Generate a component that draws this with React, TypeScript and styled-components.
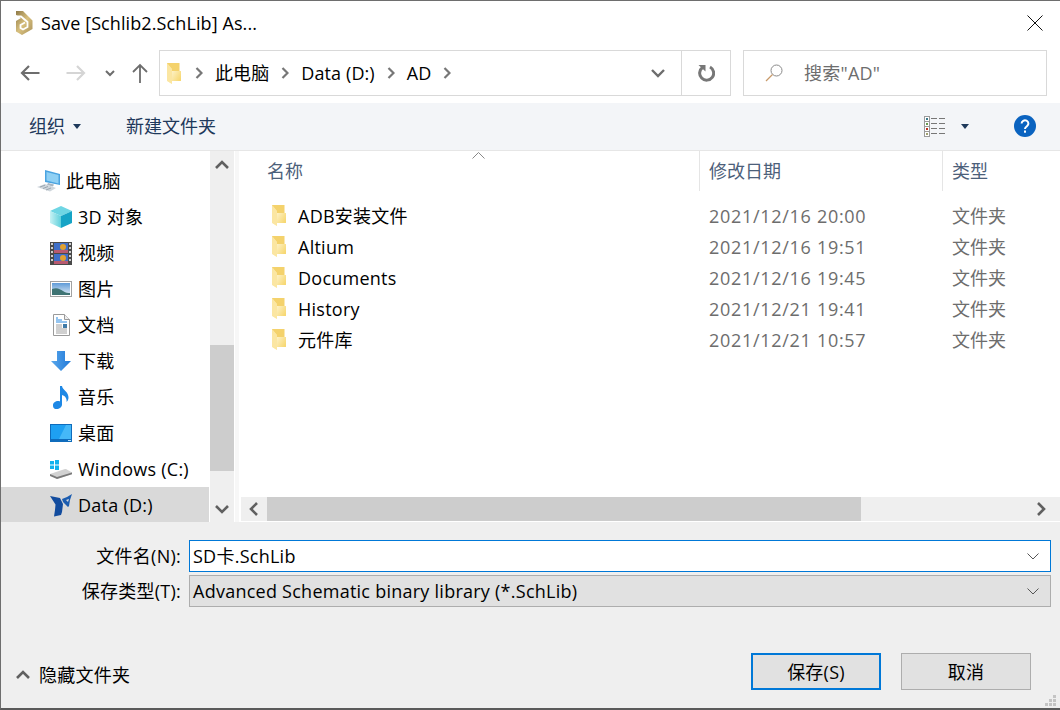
import styled, { createGlobalStyle } from "styled-components";

const GlobalStyle = createGlobalStyle`
  html, body {
    margin: 0;
    padding: 0;
    background: #fff;
  }
  * {
    box-sizing: border-box;
  }
`;

const uiFont = `"Open Sans", "Noto Sans CJK SC", sans-serif`;

const Frame = styled.div`
  width: 1060px;
  height: 710px;
  display: flex;
  flex-direction: column;
  position: relative;
  overflow: hidden;
  border-top: 1px solid #6e6e6e;
  border-left: 1px solid #6e6e6e;
  border-bottom: 2px solid #5a5a5a;
  background: #fff;
  font-family: ${uiFont};
  font-size: 18px;
  line-height: 24px;
  letter-spacing: 0.25px;
  color: #000;
`;

const TitleBar = styled.div`
  height: 49px;
  flex: none;
  display: flex;
  align-items: center;
  padding: 0 17px 5px 15px;
`;

const TitleText = styled.span`
  margin-left: 8px;
  letter-spacing: 0.1px;
  flex: 1;
`;

const NavRow = styled.div`
  height: 53px;
  flex: none;
  display: flex;
  padding: 0 0 7px 9px;
`;

const NavButton = styled.div<{ $w: number }>`
  width: ${(p) => p.$w}px;
  margin-right: 6px;
  flex: none;
  display: flex;
  align-items: center;
  justify-content: center;
`;

const AddressBar = styled.div`
  width: 572px;
  margin-left: -3px;
  flex: none;
  display: flex;
  align-items: center;
  border: 1px solid #d9d9d9;
`;

const Crumbs = styled.div`
  flex: 1;
  display: flex;
  align-items: center;
  gap: 12px;
  padding-left: 7px;
  letter-spacing: 0.1px;
`;

const CrumbFolder = styled.div`
  margin-right: 2px;
  display: flex;
`;

const AddressAction = styled.div<{ $w: number; $divided?: boolean }>`
  width: ${(p) => p.$w}px;
  height: 100%;
  flex: none;
  display: flex;
  align-items: center;
  justify-content: center;
  border-left: ${(p) => (p.$divided ? "1px solid #d9d9d9" : "none")};
`;

const SearchBox = styled.div`
  width: 304px;
  margin-left: 12px;
  flex: none;
  display: flex;
  align-items: center;
  gap: 21px;
  padding-left: 21px;
  border: 1px solid #d9d9d9;
  color: #6d6d6d;
`;

const Toolbar = styled.div`
  height: 48px;
  flex: none;
  display: flex;
  align-items: center;
  padding: 0 24px 1px 28px;
  background: #f3f5f8;
  border-bottom: 1px solid #e6e6e6;
  color: #1e395b;
  letter-spacing: 0;
`;

const ToolItem = styled.div<{ $gap?: number }>`
  display: flex;
  align-items: center;
  gap: ${(p) => p.$gap ?? 8}px;
  margin-right: 45px;
`;

const ToolSpacer = styled.div`
  flex: 1;
`;

const HelpSlot = styled.div`
  display: flex;
`;

const Main = styled.div`
  height: 371px;
  flex: none;
  display: flex;
`;

const Sidebar = styled.div`
  width: 209px;
  flex: none;
  padding: 12px 1px 0 0;
  display: flex;
  flex-direction: column;
`;

const NavTreeRow = styled.div<{ $indent: number; $selected?: boolean }>`
  height: 36px;
  flex: none;
  display: flex;
  align-items: center;
  gap: 5px;
  padding-left: ${(p) => p.$indent}px;
  background: ${(p) => (p.$selected ? "#d9d9d9" : "transparent")};
`;

const TreeIcon = styled.div`
  width: 24px;
  height: 24px;
  flex: none;
  display: flex;
  align-items: center;
  justify-content: center;
`;

const VScroll = styled.div`
  width: 24px;
  flex: none;
  display: flex;
  flex-direction: column;
  background: #efefef;
`;

const ScrollArrow = styled.div<{ $w?: number }>`
  flex: none;
  width: ${(p) => (p.$w ? `${p.$w}px` : "100%")};
  height: ${(p) => (p.$w ? "100%" : "27px")};
  display: flex;
  align-items: center;
  justify-content: center;
`;

const VTrack = styled.div`
  flex: 1;
  padding: 167px 0 24px;
  display: flex;
`;

const Thumb = styled.div`
  flex: 1;
  background: #cdcdcd;
`;

const PaneGap = styled.div`
  width: 7px;
  flex: none;
  background: linear-gradient(90deg, #fff 0, #fff 1px, #f7f7f7 1px, #f7f7f7 5px, #fff 5px);
`;

const ContentPane = styled.div`
  flex: 1;
  min-width: 0;
  position: relative;
  display: flex;
  flex-direction: column;
`;

const FileList = styled.div`
  flex: 1;
`;

const columns = "458px 243px 1fr";

const HeaderRow = styled.div`
  height: 40px;
  display: grid;
  grid-template-columns: ${columns};
  color: #4c607a;
  letter-spacing: 0;
`;

const HeaderCell = styled.div<{ $pad: number; $divided?: boolean }>`
  display: flex;
  align-items: center;
  padding-left: ${(p) => p.$pad}px;
  border-left: ${(p) => (p.$divided ? "1px solid #e5e5e5" : "none")};
`;

const SortArrow = styled.svg`
  position: absolute;
  left: 231px;
  top: 1px;
  width: 13px;
  height: 7px;
`;

const FileRows = styled.div`
  padding-top: 9px;
`;

const FileRow = styled.div`
  height: 31px;
  display: grid;
  grid-template-columns: ${columns};
  align-items: center;
`;

const NameCell = styled.div`
  display: flex;
  align-items: center;
  gap: 12px;
  padding-left: 31px;
`;

const MetaCell = styled.div<{ $spread?: boolean }>`
  padding-left: 10px;
  color: #6d6d6d;
  letter-spacing: ${(p) => (p.$spread ? "0.7px" : "0")};
`;

const HScroll = styled.div`
  height: 24px;
  flex: none;
  margin-bottom: 1px;
  display: flex;
  background: #efefef;
`;

const HTrack = styled.div`
  width: 594px;
  background: #cdcdcd;
`;

const HSpacer = styled.div`
  flex: 1;
`;

const Footer = styled.div`
  flex: 1;
  display: flex;
  flex-direction: column;
  padding-top: 18px;
  background: #efefef;
`;

const FieldRow = styled.div`
  height: 32px;
  margin-bottom: 3px;
  display: flex;
  align-items: center;
  padding-right: 9px;
`;

const FieldLabel = styled.div`
  width: 180px;
  flex: none;
  margin-right: 8px;
  text-align: right;
`;

const Field = styled.div<{ $focused?: boolean }>`
  flex: 1;
  height: 100%;
  display: flex;
  align-items: center;
  justify-content: space-between;
  padding: 0 11px 0 3px;
  border: 1px solid ${(p) => (p.$focused ? "#0078d7" : "#adadad")};
  background: ${(p) => (p.$focused ? "#fff" : "#e1e1e1")};
`;

const ActionRow = styled.div`
  margin-top: 43px;
  height: 37px;
  display: flex;
  padding: 0 29px 0 15px;
`;

const ToggleFolders = styled.div`
  align-self: flex-end;
  height: 30px;
  flex: 1;
  display: flex;
  align-items: center;
  gap: 9px;
`;

const DialogButton = styled.div<{ $primary?: boolean }>`
  width: 130px;
  height: 37px;
  margin-left: 20px;
  display: flex;
  align-items: center;
  justify-content: center;
  background: #e1e1e1;
  border: ${(p) => (p.$primary ? "2px solid #0078d7" : "1px solid #adadad")};
`;

const Grip = styled.svg`
  position: absolute;
  right: 3px;
  bottom: 1px;
  width: 12px;
  height: 12px;
`;

const CloseIcon = () => (
  <svg width="16" height="16" viewBox="0 0 16 16">
    <path d="M.5.5l15 15M15.5.5l-15 15" stroke="#111" strokeWidth="1" fill="none" />
  </svg>
);

const AppLogo = () => (
  <svg width="17" height="24" viewBox="0 0 17 24">
    <defs>
      <linearGradient id="logoGold" x1="0" y1="0" x2="1" y2="1">
        <stop offset="0" stopColor="#8f7a48" />
        <stop offset="0.5" stopColor="#d8c07e" />
        <stop offset="1" stopColor="#a8905a" />
      </linearGradient>
    </defs>
    <path d="M0 0h7l9.500 9.500V18L6 24l-6-3.500V10l5-3L0 4z" fill="url(#logoGold)" />
    <path d="M0 5.500h5l6.500 5.500v5L7 18.500l-2.500-1.500v-3L9 11.500" stroke="#fff" strokeWidth="1.800" fill="none" />
  </svg>
);

const BackArrow = ({ color }: { color: string }) => (
  <svg width="20" height="16" viewBox="0 0 20 16">
    <path d="M19.500 8H2M9 1L2 8l7 7" stroke={color} strokeWidth="2.200" fill="none" />
  </svg>
);

const ForwardArrow = ({ color }: { color: string }) => (
  <svg width="20" height="16" viewBox="0 0 20 16">
    <path d="M.5 8H18M11 1l7 7-7 7" stroke={color} strokeWidth="2.200" fill="none" />
  </svg>
);

const UpArrow = () => (
  <svg width="16" height="20" viewBox="0 0 16 20">
    <path d="M8 20V2M1 9l7-7 7 7" stroke="#6d6d6d" strokeWidth="1.800" fill="none" />
  </svg>
);

const SmallDown = ({ color = "#6d6d6d" }: { color?: string }) => (
  <svg width="10" height="7" viewBox="0 0 10 7">
    <path d="M1 1l4 4 4-4" stroke={color} strokeWidth="2" fill="none" />
  </svg>
);

const CrumbChevron = () => (
  <svg width="8" height="12" viewBox="0 0 8 12">
    <path d="M1.500 1l5 5-5 5" stroke="#777" strokeWidth="2.200" fill="none" />
  </svg>
);

const WideDown = () => (
  <svg width="14" height="9" viewBox="0 0 14 9">
    <path d="M1 1l6 6 6-6" stroke="#6d6d6d" strokeWidth="2.400" fill="none" />
  </svg>
);

const Refresh = () => (
  <svg width="18" height="18" viewBox="0 0 18 18">
    <path d="M5.500 3.500A7 7 0 1 0 13 3" stroke="#777" strokeWidth="3" fill="none" />
    <path d="M1.500 1L8.500 1v6.500z" fill="#777" />
  </svg>
);

const SearchGlyph = () => (
  <svg width="18" height="18" viewBox="0 0 18 18">
    <circle cx="11.500" cy="6.500" r="5.500" stroke="#8a8a8a" strokeWidth="1" fill="none" />
    <path d="M7.500 10.500L1 17" stroke="#c89a6a" strokeWidth="1.200" fill="none" />
  </svg>
);

const Caret = () => (
  <svg width="8" height="5" viewBox="0 0 8 5">
    <path d="M0 0h8L4 5z" fill="#1e395b" />
  </svg>
);

const ViewList = () => (
  <svg width="21" height="21" viewBox="0 0 21 21">
    <rect x=".5" y=".5" width="5" height="20" fill="#fff" stroke="#9a9a9a" />
    <path d="M1 5.500h4M1 10.500h4M1 15.500h4" stroke="#9a9a9a" />
    <rect x="2" y="2" width="2" height="2" fill="#3a7a8a" />
    <rect x="2" y="7" width="2" height="2" fill="#6a9a50" />
    <rect x="2" y="12" width="2" height="2" fill="#c03020" />
    <rect x="2" y="17" width="2" height="2" fill="#a0a070" />
    <path d="M7 2.500h6M15 2.500h6M7 7.500h6M15 7.500h6M7 12.500h6M15 12.500h6M7 17.500h6M15 17.500h6" stroke="#777" />
  </svg>
);

const HelpIcon = () => (
  <svg width="22" height="22" viewBox="0 0 22 22">
    <circle cx="11" cy="11" r="11" fill="#0a63c0" />
    <path
      d="M7.600 8.500a3.400 3.200 0 1 1 5.400 2.600c-1.300 1-2 1.500-2 3"
      stroke="#fff"
      strokeWidth="2"
      fill="none"
    />
    <rect x="10" y="15.500" width="2" height="2.200" fill="#fff" />
  </svg>
);

const FolderIcon = ({ id }: { id: string }) => (
  <svg width="14" height="21" viewBox="0 0 14 21">
    <defs>
      <linearGradient id={id} x1="0" y1="0" x2="1" y2="0.7">
        <stop offset="0" stopColor="#fdf1c6" />
        <stop offset="1" stopColor="#f7d873" />
      </linearGradient>
    </defs>
    <path d="M0 0h12.500v9H14v9H0z" fill="#f4d26c" />
    <path d="M1 1.500l4 5V21l-4-2.500z" fill="#fdf3cf" />
    <path d="M5 8h9v10H5z" fill={`url(#${id})`} />
    <path d="M0 0l5 6v15l-5-3z" fill="#fbe6a2" />
  </svg>
);

const PcIcon = () => (
  <svg width="24" height="22" viewBox="0 0 24 22">
    <path d="M8 0l15 4v11L8 12z" fill="#4aa3e0" />
    <path d="M9.500 2l12 3v8.500l-12-3z" fill="#8fd0f4" />
    <path d="M11 13l6 1.500-1 2-6-1.500z" fill="#a8b6c2" />
    <path d="M0 17l8-3 11 4-6 3.500z" fill="#cfd6dc" />
    <path d="M3 17l5-1.800M6 18.500l5-2M9 20l5-2" stroke="#9aa6b0" fill="none" />
  </svg>
);

const CubeIcon = () => (
  <svg width="22" height="22" viewBox="0 0 22 22">
    <defs>
      <linearGradient id="cubeLeft" x1="0" y1="0" x2="1" y2="0">
        <stop offset="0" stopColor="#c8f2f4" />
        <stop offset="1" stopColor="#5fd0dc" />
      </linearGradient>
    </defs>
    <path d="M11 0l11 5-11 5L0 5z" fill="#6fd6e4" />
    <path d="M0 5l11 5v12L0 17z" fill="url(#cubeLeft)" />
    <path d="M22 5L11 10v12l11-5z" fill="#16a4c6" />
  </svg>
);

const FilmIcon = () => (
  <svg width="22" height="23" viewBox="0 0 22 23">
    <rect width="22" height="23" fill="#4a4a4a" />
    <path d="M1 1h2v2H1zM1 5h2v2H1zM1 9h2v2H1zM1 13h2v2H1zM1 17h2v2H1zM19 1h2v2h-2zM19 5h2v2h-2zM19 9h2v2h-2zM19 13h2v2h-2zM19 17h2v2h-2z" fill="#cfcfcf" />
    <rect x="4" y="1" width="14" height="10" fill="#3f6fc8" />
    <rect x="4" y="12" width="14" height="10" fill="#3f6fc8" />
    <path d="M4 8h14v3H4zM4 19h14v3H4z" fill="#b85a70" />
    <circle cx="13" cy="5" r="3" fill="#e0a030" />
    <circle cx="13" cy="16" r="3" fill="#e0a030" />
  </svg>
);

const PictureIcon = () => (
  <svg width="22" height="16" viewBox="0 0 22 16">
    <defs>
      <linearGradient id="picSky" x1="0" y1="0" x2="0" y2="1">
        <stop offset="0" stopColor="#5f9bd8" />
        <stop offset="1" stopColor="#e4eef6" />
      </linearGradient>
    </defs>
    <rect x=".5" y=".5" width="21" height="15" fill="#fff" stroke="#a3a3a3" />
    <rect x="2" y="2" width="18" height="12" fill="url(#picSky)" />
    <path d="M2 8c5-2 8 0 11 2s5 2 7 2v2H2z" fill="#3f7474" />
  </svg>
);

const DocIcon = () => (
  <svg width="17" height="22" viewBox="0 0 17 22">
    <path d="M.5.5h11l5 5v16H.5z" fill="#fff" stroke="#9a9a9a" />
    <path d="M11.500.5v5h5" fill="#eee" stroke="#9a9a9a" />
    <path d="M3 4h2M3 6h6M3 8h11" stroke="#2a8ae0" />
    <path d="M3 11h6M3 13h6M3 15h11M3 17h11M3 19h11" stroke="#a0a0a0" />
    <rect x="10" y="10" width="4" height="4" fill="#3f7aa8" />
  </svg>
);

const DownloadIcon = () => (
  <svg width="20" height="20" viewBox="0 0 20 20">
    <defs>
      <linearGradient id="dlBlue" x1="0" y1="0" x2="1" y2="0">
        <stop offset="0" stopColor="#5aa8ec" />
        <stop offset="1" stopColor="#1f78d8" />
      </linearGradient>
    </defs>
    <path d="M6 0h8v10h6l-10 10L0 10h6z" fill="url(#dlBlue)" />
  </svg>
);

const MusicIcon = () => (
  <svg width="18" height="23" viewBox="0 0 18 23">
    <path
      d="M8 0h2c.5 4 7 6 6.500 12-.2 2-1 3-2 4 .5-3-1-6-4.500-7v9.500c0 2.500-2.500 4.500-5.500 4.500S1 21 1 19s2.500-4 5-4c.7 0 1.500.1 2 .4z"
      fill="#1e88e5"
    />
  </svg>
);

const DesktopIcon = () => (
  <svg width="22" height="18" viewBox="0 0 22 18">
    <rect width="22" height="18" fill="#0f6cbc" />
    <rect x="1" y="1" width="20" height="14" fill="#1ea0f2" />
    <path d="M9 15L16 1h5v14z" fill="#45b8f8" />
    <path d="M18 16.500h3" stroke="#bfe4fa" />
  </svg>
);

const DriveIcon = () => (
  <svg width="23" height="19" viewBox="0 0 23 19">
    <path d="M0 1h4v3.500H0zM5 0h4v4.500H5zM0 5.500h4V9H0zM5 5.500h4V10H5z" fill="#12b2ee" />
    <path d="M0 14l15-5h1l6 3.500v1.500L7 19z" fill="#d2d2d2" />
    <path d="M0 14l7 3 15-4.500v1.800L7 19l-7-3z" fill="#7a7a7a" />
  </svg>
);

const NiLogo = () => (
  <svg width="23" height="23" viewBox="0 0 23 23">
    <path d="M0 2l10 2 3 6-1 8-1 3-7 1.500 1-6.500.5-5.500z" fill="#124c9e" />
    <path d="M22 0l-2 6-1 6-1 1-5-5-1-3 5-2z" fill="#1c5db0" />
    <path d="M16 6l3-1-1 3z" fill="#d9d9d9" />
  </svg>
);

const ScrollChevron = ({ dir }: { dir: "up" | "down" | "left" | "right" }) => {
  const paths = {
    up: "M1 8l6-6 6 6",
    down: "M1 2l6 6 6-6",
    left: "M8 1L2 7l6 6",
    right: "M2 1l6 6-6 6",
  };
  const flat = dir === "up" || dir === "down";
  return (
    <svg width={flat ? 14 : 10} height={flat ? 10 : 14} viewBox={flat ? "0 0 14 10" : "0 0 10 14"}>
      <path d={paths[dir]} stroke="#606060" strokeWidth="2.600" fill="none" />
    </svg>
  );
};

const ThinDown = () => (
  <svg width="12" height="7" viewBox="0 0 12 7">
    <path d="M.5.5L6 6 11.500.5" stroke="#555" strokeWidth="1" fill="none" />
  </svg>
);

const treeItems = [
  { label: "此电脑", icon: <PcIcon />, indent: 36 },
  { label: "3D 对象", icon: <CubeIcon />, indent: 48 },
  { label: "视频", icon: <FilmIcon />, indent: 48 },
  { label: "图片", icon: <PictureIcon />, indent: 48 },
  { label: "文档", icon: <DocIcon />, indent: 48 },
  { label: "下载", icon: <DownloadIcon />, indent: 48 },
  { label: "音乐", icon: <MusicIcon />, indent: 48 },
  { label: "桌面", icon: <DesktopIcon />, indent: 48 },
  { label: "Windows (C:)", icon: <DriveIcon />, indent: 48 },
  { label: "Data (D:)", icon: <NiLogo />, indent: 48, selected: true },
];

const files = [
  { name: "ADB安装文件", date: "2021/12/16 20:00" },
  { name: "Altium", date: "2021/12/16 19:51" },
  { name: "Documents", date: "2021/12/16 19:45" },
  { name: "History", date: "2021/12/21 19:41" },
  { name: "元件库", date: "2021/12/21 10:57" },
];

const App = () => {
  return (
    <Frame>
      <GlobalStyle />
      <TitleBar>
        <AppLogo />
        <TitleText>Save [Schlib2.SchLib] As...</TitleText>
        <CloseIcon />
      </TitleBar>

      <NavRow>
        <NavButton $w={40}>
          <BackArrow color="#6d6d6d" />
        </NavButton>
        <NavButton $w={40}>
          <ForwardArrow color="#d5d5d5" />
        </NavButton>
        <NavButton $w={16}>
          <SmallDown />
        </NavButton>
        <NavButton $w={32}>
          <UpArrow />
        </NavButton>
        <AddressBar>
          <Crumbs>
            <CrumbFolder>
              <FolderIcon id="crumbFolder" />
            </CrumbFolder>
            <CrumbChevron />
            <span>此电脑</span>
            <CrumbChevron />
            <span>Data (D:)</span>
            <CrumbChevron />
            <span>AD</span>
            <CrumbChevron />
          </Crumbs>
          <AddressAction $w={46}>
            <WideDown />
          </AddressAction>
          <AddressAction $w={49} $divided>
            <Refresh />
          </AddressAction>
        </AddressBar>
        <SearchBox>
          <SearchGlyph />
          <span>搜索"AD"</span>
        </SearchBox>
      </NavRow>

      <Toolbar>
        <ToolItem>
          <span>组织</span>
          <Caret />
        </ToolItem>
        <ToolItem>新建文件夹</ToolItem>
        <ToolSpacer />
        <ToolItem $gap={16}>
          <ViewList />
          <Caret />
        </ToolItem>
        <HelpSlot>
          <HelpIcon />
        </HelpSlot>
      </Toolbar>

      <Main>
        <Sidebar>
          {treeItems.map((item) => (
            <NavTreeRow key={item.label} $indent={item.indent} $selected={item.selected}>
              <TreeIcon>{item.icon}</TreeIcon>
              <span>{item.label}</span>
            </NavTreeRow>
          ))}
        </Sidebar>
        <VScroll>
          <ScrollArrow>
            <ScrollChevron dir="up" />
          </ScrollArrow>
          <VTrack>
            <Thumb />
          </VTrack>
          <ScrollArrow>
            <ScrollChevron dir="down" />
          </ScrollArrow>
        </VScroll>
        <PaneGap />
        <ContentPane>
          <FileList>
            <HeaderRow>
              <HeaderCell $pad={26}>名称</HeaderCell>
              <HeaderCell $pad={9} $divided>
                修改日期
              </HeaderCell>
              <HeaderCell $pad={9} $divided>
                类型
              </HeaderCell>
            </HeaderRow>
            <SortArrow viewBox="0 0 13 7">
              <path d="M.5 6.500L6.500.5l6 6" stroke="#888" fill="none" />
            </SortArrow>
            <FileRows>
              {files.map((file) => (
                <FileRow key={file.name}>
                  <NameCell>
                    <FolderIcon id={`folder-${file.name}`} />
                    <span>{file.name}</span>
                  </NameCell>
                  <MetaCell $spread>{file.date}</MetaCell>
                  <MetaCell>文件夹</MetaCell>
                </FileRow>
              ))}
            </FileRows>
          </FileList>
          <HScroll>
            <ScrollArrow $w={26}>
              <ScrollChevron dir="left" />
            </ScrollArrow>
            <HTrack />
            <HSpacer />
            <ScrollArrow $w={38}>
              <ScrollChevron dir="right" />
            </ScrollArrow>
          </HScroll>
        </ContentPane>
      </Main>

      <Footer>
        <FieldRow>
          <FieldLabel>文件名(N):</FieldLabel>
          <Field $focused>
            <span>SD卡.SchLib</span>
            <ThinDown />
          </Field>
        </FieldRow>
        <FieldRow>
          <FieldLabel>保存类型(T):</FieldLabel>
          <Field>
            <span>Advanced Schematic binary library (*.SchLib)</span>
            <ThinDown />
          </Field>
        </FieldRow>
        <ActionRow>
          <ToggleFolders>
            <ScrollChevron dir="up" />
            <span>隐藏文件夹</span>
          </ToggleFolders>
          <DialogButton $primary>保存(S)</DialogButton>
          <DialogButton>取消</DialogButton>
        </ActionRow>
        <Grip viewBox="0 0 12 12">
          <path d="M8 0h3v3H8zM4 4h3v3H4zM8 4h3v3H8zM0 8h3v3H0zM4 8h3v3H4zM8 8h3v3H8z" fill="#c4c4c4" />
        </Grip>
      </Footer>
    </Frame>
  );
};

export default App;
